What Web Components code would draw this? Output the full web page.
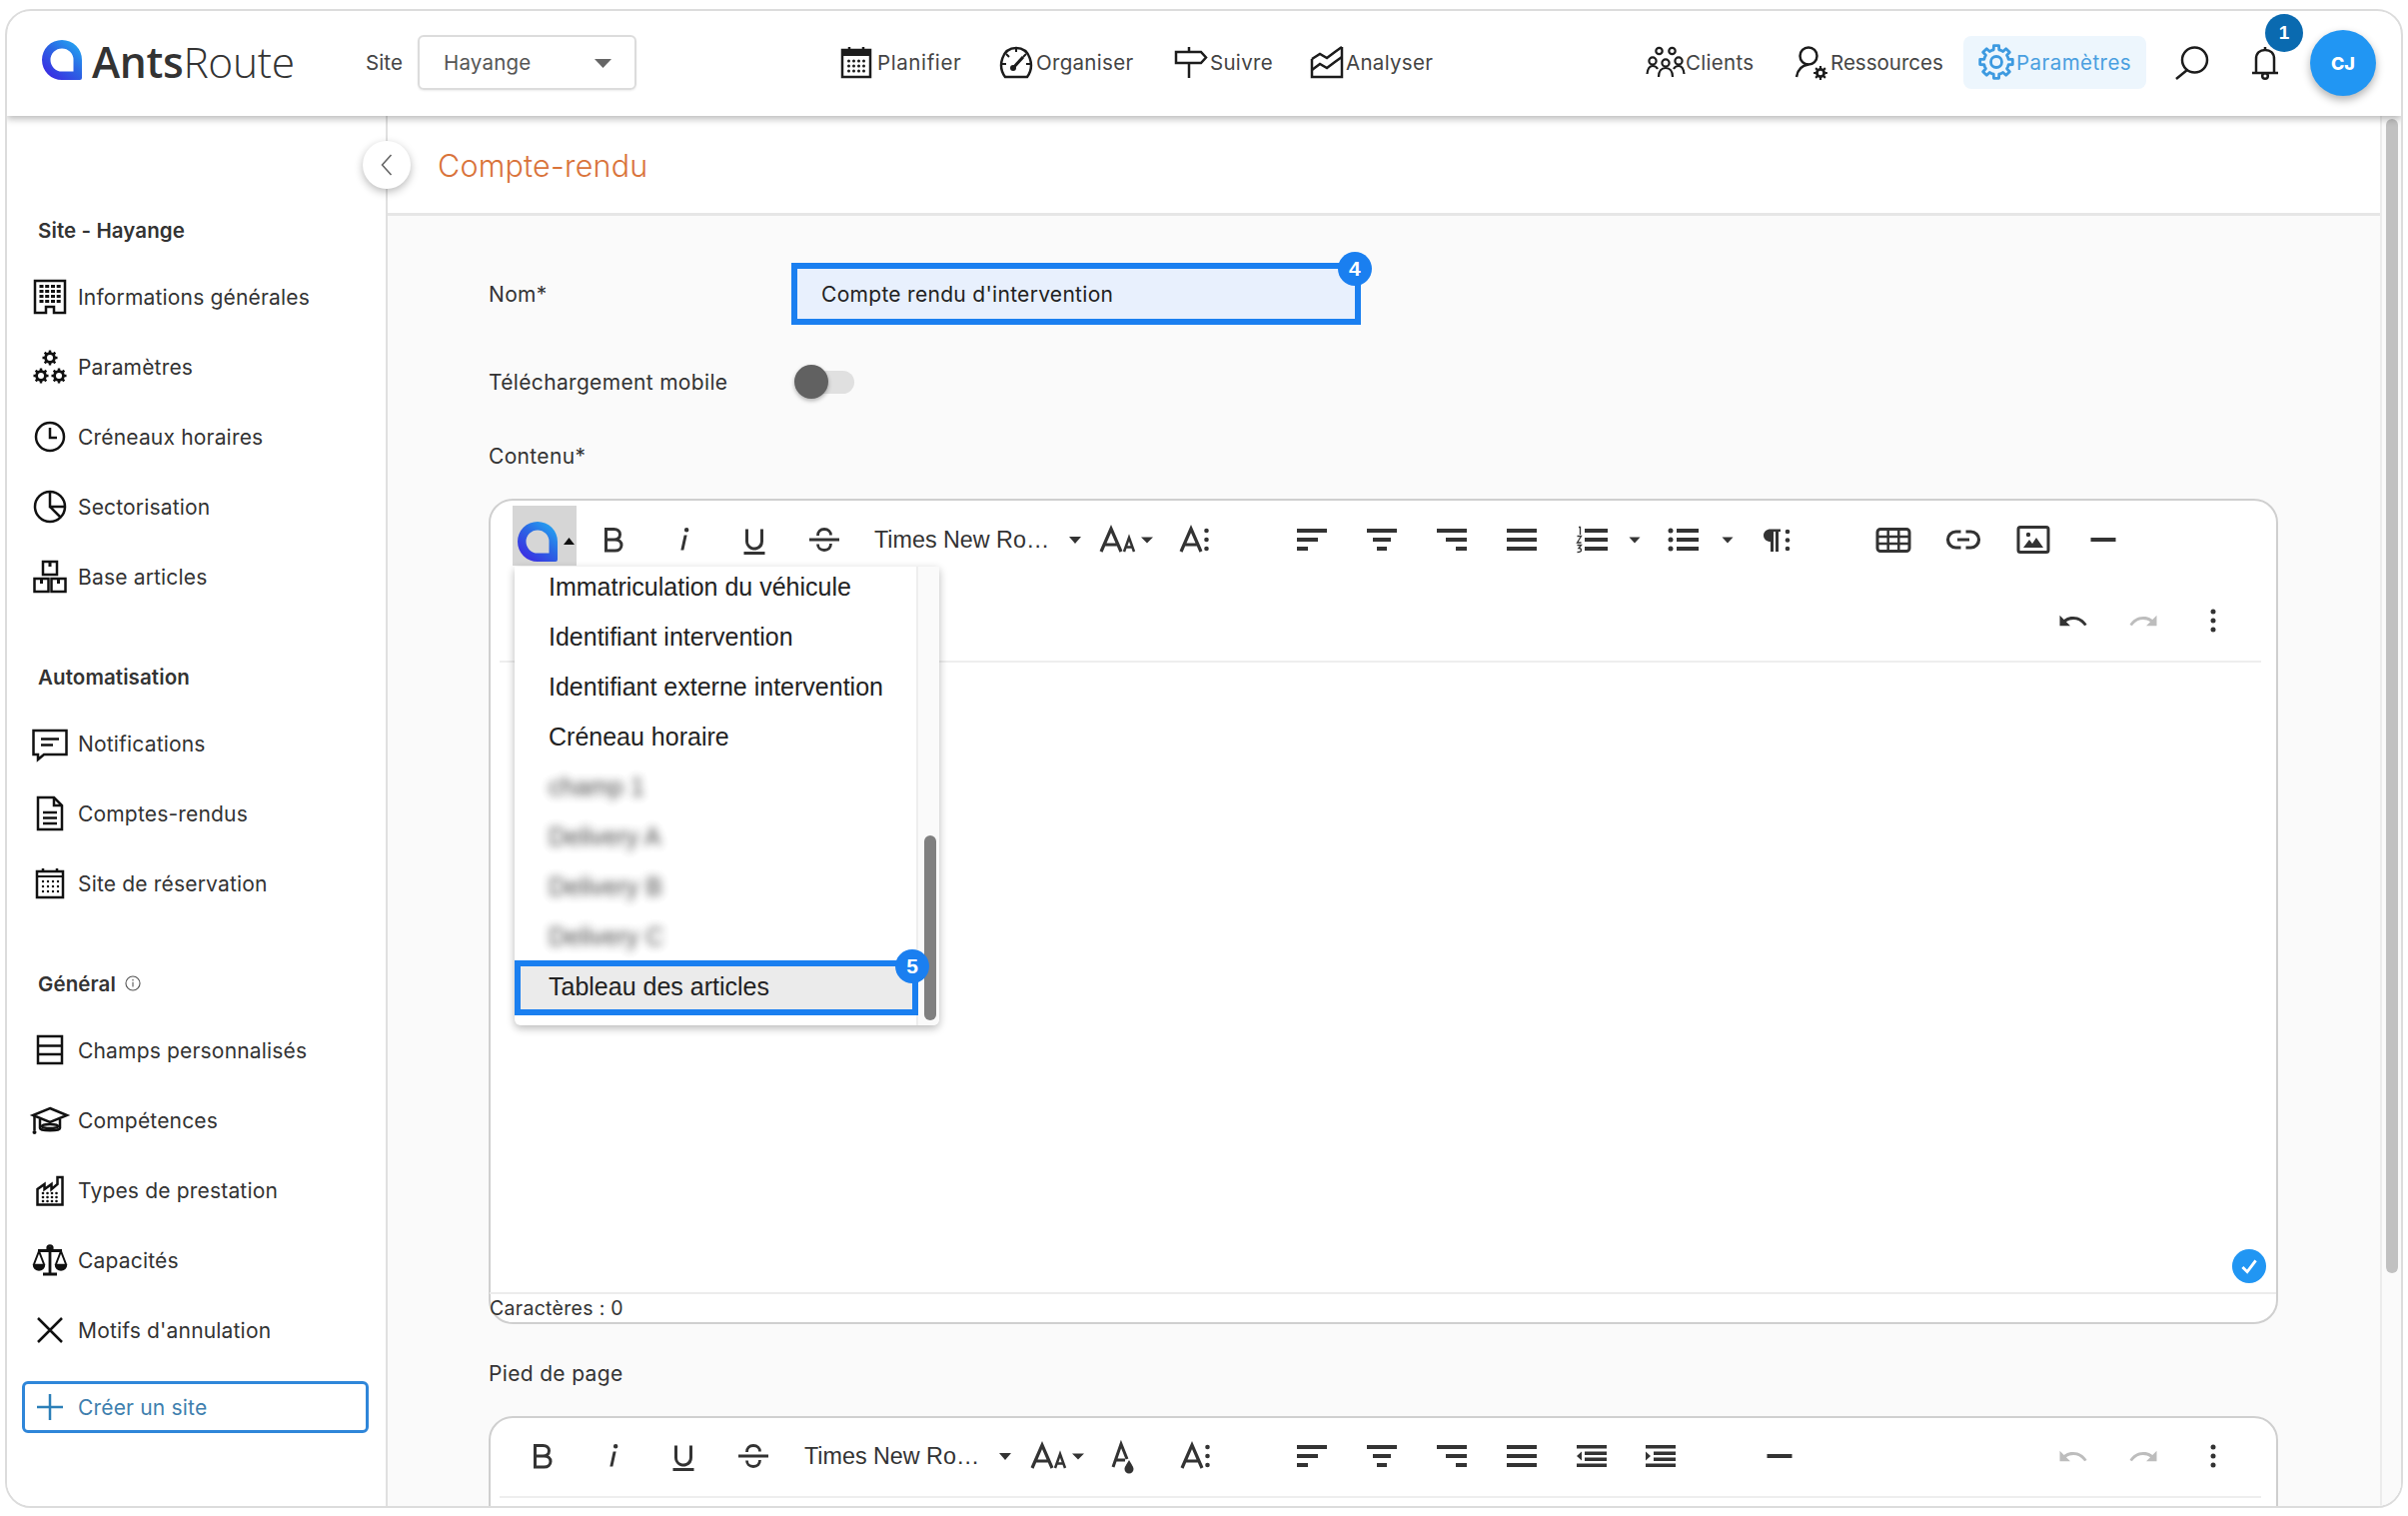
<!DOCTYPE html>
<html lang="fr">
<head>
<meta charset="utf-8">
<title>AntsRoute</title>
<style>
html,body{margin:0;padding:0;background:#fff;}
body{font-family:Inter,"Noto Sans",sans-serif;color:#333;width:2410px;height:1517px;overflow:hidden;}
</style>
</head>
<body>
<ar-app>
  <ar-header slot="header"></ar-header>
  <ar-sidebar slot="side">
    <ar-side-title style="margin-top:94px">Site - Hayange</ar-side-title>
    <ar-side-item icon="building" style="margin-top:12px">Informations générales</ar-side-item>
    <ar-side-item icon="gears">Paramètres</ar-side-item>
    <ar-side-item icon="clock">Créneaux horaires</ar-side-item>
    <ar-side-item icon="pie">Sectorisation</ar-side-item>
    <ar-side-item icon="boxes">Base articles</ar-side-item>
    <ar-side-title style="margin-top:45px">Automatisation</ar-side-title>
    <ar-side-item icon="chat" style="margin-top:12px">Notifications</ar-side-item>
    <ar-side-item icon="doc">Comptes-rendus</ar-side-item>
    <ar-side-item icon="calendar">Site de réservation</ar-side-item>
    <ar-side-title info style="margin-top:45px">Général</ar-side-title>
    <ar-side-item icon="rows" style="margin-top:12px">Champs personnalisés</ar-side-item>
    <ar-side-item icon="cap">Compétences</ar-side-item>
    <ar-side-item icon="factory">Types de prestation</ar-side-item>
    <ar-side-item icon="scales">Capacités</ar-side-item>
    <ar-side-item icon="cross">Motifs d'annulation</ar-side-item>
    <ar-create-button>Créer un site</ar-create-button>
  </ar-sidebar>
  <ar-page slot="main">
    <ar-field-row label="Nom*" style="margin-top:47px;height:62px">
      <ar-text-input>Compte rendu d'intervention<ar-badge slot="badge">4</ar-badge></ar-text-input>
    </ar-field-row>
    <ar-field-row label="Téléchargement mobile" style="margin-top:24px;height:66px">
      <ar-toggle></ar-toggle>
    </ar-field-row>
    <ar-field-label style="margin-top:24px">Contenu*</ar-field-label>
    <ar-editor style="margin-top:26px;height:826px" counter="Caractères : 0" check>
      <ar-toolbar slot="toolbar" style="padding-left:22px">
        <ar-logo-tool></ar-logo-tool>
        <ar-tool icon="bold" style="margin-left:3px"></ar-tool>
        <ar-tool icon="italic"></ar-tool>
        <ar-tool icon="underline"></ar-tool>
        <ar-tool icon="strike"></ar-tool>
        <ar-font-tool style="--w:232px;--pl:15px;--cx:10px">Times New Ro…</ar-font-tool>
        <ar-tool icon="size"></ar-tool>
        <ar-tool icon="adots"></ar-tool>
        <ar-tool icon="aleft" style="margin-left:46px"></ar-tool>
        <ar-tool icon="acenter"></ar-tool>
        <ar-tool icon="aright"></ar-tool>
        <ar-tool icon="ajust"></ar-tool>
        <ar-tool icon="ol" style="--w:69px"></ar-tool>
        <ar-tool icon="caret" style="--w:23px;margin-left:-3px;margin-right:3px"></ar-tool>
        <ar-tool icon="ul"></ar-tool>
        <ar-tool icon="caret" style="--w:23px;margin-left:-3px;margin-right:3px"></ar-tool>
        <ar-tool icon="para" style="--w:69px"></ar-tool>
        <ar-tool icon="table" style="margin-left:48px"></ar-tool>
        <ar-tool icon="link"></ar-tool>
        <ar-tool icon="image"></ar-tool>
        <ar-tool icon="hr"></ar-tool>
      </ar-toolbar>
      <ar-toolbar slot="toolbar" style="margin-top:11px;justify-content:flex-end;padding-right:28px">
        <ar-tool icon="undo"></ar-tool>
        <ar-tool icon="redo" style="color:#bdbdbd"></ar-tool>
        <ar-tool icon="more"></ar-tool>
      </ar-toolbar>
      <ar-dropdown slot="overlay">
        <ar-drop-item>Immatriculation du véhicule</ar-drop-item>
        <ar-drop-item>Identifiant intervention</ar-drop-item>
        <ar-drop-item>Identifiant externe intervention</ar-drop-item>
        <ar-drop-item>Créneau horaire</ar-drop-item>
        <ar-drop-item blurred>champ 1</ar-drop-item>
        <ar-drop-item blurred>Delivery A</ar-drop-item>
        <ar-drop-item blurred>Delivery B</ar-drop-item>
        <ar-drop-item blurred>Delivery C</ar-drop-item>
        <ar-drop-item selected>Tableau des articles<ar-badge slot="badge">5</ar-badge></ar-drop-item>
      </ar-dropdown>
    </ar-editor>
    <ar-field-label style="margin-top:32px">Pied de page</ar-field-label>
    <ar-editor style="margin-top:26px;height:400px;flex:none" compact>
      <ar-toolbar slot="toolbar" style="padding-left:18px;padding-right:28px">
        <ar-tool icon="bold"></ar-tool>
        <ar-tool icon="italic"></ar-tool>
        <ar-tool icon="underline"></ar-tool>
        <ar-tool icon="strike"></ar-tool>
        <ar-font-tool style="--w:234px;--pl:16px;--cx:11px">Times New Ro…</ar-font-tool>
        <ar-tool icon="size"></ar-tool>
        <ar-tool icon="adrop"></ar-tool>
        <ar-tool icon="adots"></ar-tool>
        <ar-tool icon="aleft" style="margin-left:45px"></ar-tool>
        <ar-tool icon="acenter"></ar-tool>
        <ar-tool icon="aright"></ar-tool>
        <ar-tool icon="ajust"></ar-tool>
        <ar-tool icon="outdent" style="--w:69px"></ar-tool>
        <ar-tool icon="indent"></ar-tool>
        <ar-tool icon="hr" style="margin-left:49px"></ar-tool>
        <ar-tool icon="undo" style="margin-left:auto;color:#bdbdbd"></ar-tool>
        <ar-tool icon="redo" style="color:#bdbdbd"></ar-tool>
        <ar-tool icon="more"></ar-tool>
      </ar-toolbar>
    </ar-editor>
  </ar-page>
</ar-app>

<script>
const L='fill="none" stroke="currentColor" stroke-width="2.5"';
const F='fill="currentColor"';
const rects=(a)=>a.map(r=>`<rect x="${r[0]}" y="${r[1]}" width="${r[2]}" height="${r[3]}" ${F}/>`).join('');
const dots=(xs,ys,r)=>ys.map(y=>xs.map(x=>`<circle cx="${x}" cy="${y}" r="${r}" ${F}/>`).join('')).join('');
const blocks=(xs,ys,w,h)=>ys.map(y=>xs.map(x=>`<rect x="${x}" y="${y}" width="${w}" height="${h}" ${F}/>`).join('')).join('');
const v24=(s)=>`<g transform="scale(1.5)">${s}</g>`;
const cog=(cx,cy,R,r,n)=>{let d='';const s=Math.PI*2/n;for(let i=0;i<n;i++){const a=i*s-Math.PI/2;
  const p=[[r,a-s*.5],[r,a-s*.28],[R,a-s*.2],[R,a+s*.2],[r,a+s*.28]];
  p.forEach((q,j)=>{d+=(i==0&&j==0?'M':'L')+(cx+q[0]*Math.cos(q[1])).toFixed(2)+' '+(cy+q[0]*Math.sin(q[1])).toFixed(2)});}
  return d+'Z'};
const gear=(x,y)=>`<path d="${cog(x,y,7.6,5.8,8)}" ${F}/><circle cx="${x}" cy="${y}" r="3" fill="#fff"/>`;
const LOGO=`<defs><linearGradient id="g" x1="1" y1="0" x2="0.15" y2="1"><stop offset="0" stop-color="#22b4f4"/><stop offset=".5" stop-color="#2b66e4"/><stop offset="1" stop-color="#3d25e2"/></linearGradient></defs>
<path fill="url(#g)" fill-rule="evenodd" d="M18 -2A20 20 0 0 1 38 18V36a2 2 0 0 1-2 2H18A20 20 0 0 1 18 -2zM18 6.500a11.500 11.500 0 1 0 0 23h11.500V18A11.500 11.500 0 0 0 18 6.500z"/>`;

const ICONS={
logo:LOGO,
building:`<path d="M3 2h30v32H22v-6h-8v6H3z" ${L}/>`+blocks([7.5,13.2,19,24.7],[6,11,16,21],4,3),
gears:gear(18,9)+gear(9,27)+gear(27,27),
clock:`<circle cx="18" cy="18" r="14" ${L}/><path d="M18 9V19H25" ${L}/>`,
pie:`<circle cx="18" cy="18" r="15" ${L}/><path d="M18 3V18H33M18 18L29 29" ${L}/>`,
boxes:`<rect x="11" y="3" width="14" height="13" ${L}/><rect x="2.5" y="20" width="14" height="13" ${L}/><rect x="19.5" y="20" width="14" height="13" ${L}/>`+rects([[16.5,3,3,5],[8,20,3,5],[25,20,3,5]]),
chat:`<path d="M1.5 5h33v24H12l-6 5v-5H1.5z" ${L}/><path d="M9 13.5h18M9 19.5h12" ${L}/>`,
doc:`<path d="M6 2h16l8 8v24H6z" ${L}/><path d="M22 2v8h8" ${L}/><path d="M11 17h14M11 22.5h14M11 28h14" ${L}/>`,
calendar:`<rect x="5" y="6" width="26" height="26" ${L}/><path d="M5 11H31" fill="none" stroke="currentColor" stroke-width="2"/><path d="M11 3v4M25 3v4" ${L}/>`+dots([11,16,21,26],[16,21,26],1.2),
rows:`<rect x="6" y="4" width="24" height="27" ${L}/><path d="M6 13.5H30M6 22H30" ${L}/>`,
cap:`<path d="M18 6L35 13L18 20L1 13z" ${L}/><path d="M8 17v9c0 3 20 3 20 0V17" ${L}/><ellipse cx="18" cy="24" rx="8" ry="2" ${L}/><path d="M2.5 14V28" ${L}/><circle cx="2.5" cy="30" r="2" ${F}/>`,
factory:`<path d="M5.5 32.5V17l7-5v5l7-5v5l6-5V5h5v27.5z" ${L}/>`+dots([11,15.5,20,24.5],[21,25,29],1.3),
scales:`<path d="M18 5V31M11 32h14M6 8.5H30" fill="none" stroke="currentColor" stroke-width="2.8"/><circle cx="18" cy="6" r="2.4" ${L}/><path d="M7 9L2 22M7 9L12 22M29 9L24 22M29 9L34 22" fill="none" stroke="currentColor" stroke-width="2"/><path d="M1.5 22.5a5.5 5.5 0 0 0 11 0zM23.5 22.5a5.5 5.5 0 0 0 11 0z" ${F} stroke="currentColor" stroke-width="1.5"/>`,
cross:`<path d="M6 6L30 30M30 6L6 30" ${L}/>`,
plus:`<path d="M18 5V31M5 18H31" ${L}/>`,
info:`<circle cx="18" cy="18" r="16" fill="none" stroke="currentColor" stroke-width="2.5"/><path d="M18 15v11" ${L}/><circle cx="18" cy="10.5" r="1.8" ${F}/>`,
nplan:`<rect x="4" y="6" width="28" height="27" ${L}/><rect x="4" y="6" width="28" height="6" ${F}/><path d="M11 3v5M25 3v5" ${L}/>`+dots([10.5,15.5,20.5,25.5],[17,22,27],1.5),
ngauge:`<path d="M7 33C-1 22 4 4 18 4C32 4 37 22 29 33z" ${L}/><path d="M18 4v4M8 10l3 3M28 10l-3 3M4 20h4M32 20h-4" fill="none" stroke="currentColor" stroke-width="2"/><path d="M15 24L25 13" fill="none" stroke="currentColor" stroke-width="3"/><circle cx="15" cy="24" r="3" ${F}/>`,
nsign:`<path d="M16 3V8M16 19V34" ${L}/><path d="M3 8h25l5 5.5-5 5.5H3z" ${L}/>`,
nchart:`<path d="M3 15V33H33V3" ${L}/><path d="M3 15L11 10L18 14L26 8L33 3M3 26L11 20L18 24L26 18L33 13" ${L}/>`,
npeople:`<g fill="none" stroke="currentColor" stroke-width="2.2"><circle cx="11.5" cy="7" r="3.2"/><circle cx="24.5" cy="7" r="3.2"/><circle cx="5" cy="17" r="3.6"/><circle cx="18" cy="19" r="3.6"/><circle cx="31" cy="17" r="3.6"/><path d="M-.5 30C0 25 1.500 22 5 22C7 22 9 23 10 25M36.500 30C36 25 34.500 22 31 22C29 22 27 23 26 25M11 33C11 27 14 24 18 24C22 24 25 27 25 33"/></g>`,
nres:`<circle cx="13" cy="12" r="8.5" ${L}/><path d="M1 33C2 26 6 21.500 13 20.500" ${L}/><path d="${cog(25,29,7,5,8)}" ${F}/><circle cx="25" cy="29" r="2.2" fill="#fff"/>`,
ngear:`<path d="${cog(18,18,16.5,12.5,8)}" fill="none" stroke="currentColor" stroke-width="2.8" stroke-linejoin="round"/><circle cx="18" cy="18" r="5.5" fill="none" stroke="currentColor" stroke-width="2.8"/>`,
search:`<circle cx="20.500" cy="16" r="12.500" ${L}/><path d="M13 26L2 35" ${L}/>`,
bell:`<path d="M18 3v3M9 28V15C9 9 13 6 18 6C23 6 27 9 27 15V28M5 29H31" ${L}/><circle cx="18" cy="32" r="2.800" ${L}/>`,
bold:`<path d="M9.500 7.500h8c3.500 0 6 2 6 5.200s-2.500 5.300-6 5.300h-8zM9.500 18h9c3.800 0 6.500 2.200 6.500 5.500S22.300 29 18.500 29h-9z" fill="none" stroke="currentColor" stroke-width="3"/>`,
italic:v24(`<path ${F} d="M11.760 9h2l-2.200 10h-2Zm1.680-5a1.500 1.500 0 1 0 1.500 1.500 1.500 1.500 0 0 0-1.500-1.500Z"/>`),
underline:v24(`<path ${F} d="M19 20v2H5V20Zm-3-6.785a4 4 0 0 1-5.740 3.400A3.750 3.750 0 0 1 8 13.085V5.005H6v8.210a6 6 0 0 0 8 5.440 5.851 5.851 0 0 0 4-5.650v-8H16Z"/>`),
strike:`<rect x="3" y="16.500" width="30" height="3" ${F}/><path d="M11.500 14C11.500 10 14 7.500 18 7.500C22 7.500 24.500 10 24.500 13.500M24.500 22C24.500 26 22 28.500 18 28.500C14 28.500 11.500 26 11.500 22.500" fill="none" stroke="currentColor" stroke-width="2.8"/>`,
size:`<path d="M-7 30L3 7L13 30M-3.500 23H9.500" fill="none" stroke="currentColor" stroke-width="3.200"/><path d="M16 30L21 16L26 30M18 25.500H24" fill="none" stroke="currentColor" stroke-width="2.500"/><path d="M33 15.500h12l-6 6z" ${F}/>`,
adots:`<path d="M3 30L13 7L23 30M7 23H19" fill="none" stroke="currentColor" stroke-width="3.200"/>`+dots([28.500],[9,18,27],2.300),
adrop:`<path d="M4 29L12 6L18 21M6.500 22H16" fill="none" stroke="currentColor" stroke-width="3"/><path ${F} d="M20 22C17 27 15.500 29 15.500 31a4.500 4.500 0 0 0 9 0C24.500 29 23 27 20 22z"/>`,
caret:`<path d="M12.500 15.500h11l-5.500 6z" ${F}/>`,
aleft:rects([[3,7,30,4],[3,16,21,4],[3,25,11,4]]),
acenter:rects([[3,7,30,4],[9,16,18,4],[13,25,10,4]]),
aright:rects([[3,7,30,4],[12,16,21,4],[22,25,11,4]]),
ajust:rects([[3,7,30,4],[3,16,30,4],[3,25,30,4]]),
ol:rects([[11,7,23,4],[11,16,23,4],[11,25,23,4]])+`<path d="M5 5.500h1.500V13M3.500 14.500h4L3.500 21h4M3.500 23.500h4L5 26.500c2 0 2.500 1 2.500 2s-1 2-4 2" fill="none" stroke="currentColor" stroke-width="1.300"/>`,
ul:rects([[11,7,22,4],[11,16,22,4],[11,25,22,4]])+dots([5],[9,18,27],2.500),
para:`<path ${F} d="M12 7.500h10v2.500h-2v20h-3V10h-2v20h-3V20c-4 0-7-3-7-6.300 0-3.500 3-6.200 7-6.200z"/>`+dots([29],[10,18.500,27],2.300),
table:`<rect x="2" y="7.500" width="32" height="22" rx="3" fill="none" stroke="currentColor" stroke-width="3"/><path d="M12.700 7.500v22M23.300 7.500v22M2 15h32M2 22h32" fill="none" stroke="currentColor" stroke-width="2.500"/>`,
link:`<path d="M15.500 10h-5a8 8 0 0 0 0 16h5M20.500 10h5a8 8 0 0 1 0 16h-5M12 18H24" fill="none" stroke="currentColor" stroke-width="3.200"/>`,
image:`<rect x="3" y="5.500" width="30" height="25" rx="2" fill="none" stroke="currentColor" stroke-width="3"/><circle cx="13" cy="13" r="2.200" ${F}/><path ${F} d="M8 26l6-8 3 4 4-6 7 10z"/>`,
hr:rects([[5.500,16,25,4]]),
undo:v24(`<path ${F} d="M10.400 9.400c-1.700.3-3.200.9-4.600 2L3 8.500v7h7l-2.700-2.700c3.700-2.600 8.800-1.800 11.500 1.900.2.3.4.5.5.8l1.800-.9C18.900 10.800 14.700 8.700 10.400 9.400z"/>`),
redo:v24(`<path ${F} d="M13.600 9.400c1.700.3 3.200.9 4.600 2L21 8.500v7h-7l2.700-2.700C13 10.200 7.900 11 5.200 14.700c-.2.3-.4.5-.5.8L3 14.600C5.100 10.800 9.300 8.700 13.600 9.400z"/>`),
more:dots([18],[9,18,27],2.500),
outdent:rects([[3,7,30,3.500],[11,13.500,22,3.500],[11,19.500,22,3.500],[3,25.500,30,3.500]])+`<path d="M8 13.500v9L3 18z" ${F}/>`,
indent:rects([[3,7,30,3.500],[11,13.500,22,3.500],[11,19.500,22,3.500],[3,25.500,30,3.500]])+`<path d="M3 13.500v9L8 18z" ${F}/>`,
check:`<path d="M11 19l5 5 9-12" fill="none" stroke="#fff" stroke-width="3"/>`
};

function def(name,css,html,extra){
  const T=document.createElement('template');
  T.innerHTML=`<style>${css}</style>${html}`;
  customElements.define(name,class extends HTMLElement{
    constructor(){super();this.attachShadow({mode:'open'}).appendChild(T.content.cloneNode(true));}
    connectedCallback(){if(extra)extra.call(this,this.shadowRoot);}
  });
}

const ICON_T=document.createElement('template');
ICON_T.innerHTML=`<style>:host{display:inline-flex;width:var(--iw,36px);height:36px;justify-content:center;align-items:center;flex:none;color:inherit}
svg{width:36px;height:36px;flex:none;overflow:visible;display:block}</style><svg viewBox="0 0 36 36"></svg>`;
customElements.define('ar-icon',class extends HTMLElement{
  static get observedAttributes(){return ['name'];}
  constructor(){super();this.attachShadow({mode:'open'}).appendChild(ICON_T.content.cloneNode(true));}
  attributeChangedCallback(){this.render();}
  connectedCallback(){this.render();}
  render(){this.shadowRoot.querySelector('svg').innerHTML=ICONS[this.getAttribute('name')]||'';}
});

def('ar-app',`:host{display:flex;flex-direction:column;box-sizing:border-box;width:2400px;height:1500px;margin:9px 5px 8px;border:2px solid #dcdcdc;border-radius:26px;overflow:hidden;background:#fff}
.b{display:flex;flex:1;min-height:0}`,`<slot name="header"></slot><div class="b"><slot name="side"></slot><slot name="main"></slot></div>`);

def('ar-badge',`:host{position:absolute;top:-17px;right:-17px;width:34px;height:34px;border-radius:50%;background:#1a7ff0;color:#fff;display:flex;align-items:center;justify-content:center;font:700 21px "Liberation Sans",sans-serif;z-index:5}`,`<slot></slot>`);

def('ar-nav',`:host{display:flex;align-items:center;flex:none;width:var(--w);box-sizing:border-box;height:53px;font-size:20.5px;letter-spacing:var(--ls,.3px);color:#444;font-weight:400}
ar-icon{margin-right:var(--g,5px);color:#1c1c1c}
:host([active]){color:#4a9fe0;background:#edf6fd;border-radius:8px;padding-left:17px}
:host([active]) ar-icon{color:#3d9ae0}`,`<ar-icon></ar-icon><slot></slot>`,function(s){s.querySelector('ar-icon').setAttribute('name',this.getAttribute('icon'));});

def('ar-header',`:host{display:flex;align-items:center;box-sizing:border-box;height:105px;padding:0 0 3px 35px;flex:none;position:relative;z-index:3;background:#fff;box-shadow:0 3px 7px rgba(0,0,0,.28)}
.logo{display:flex;align-items:center;width:324px;flex:none}
.logo ar-icon{margin-top:-4px}
.lt{margin-left:10px;font:600 42.5px/1 "Open Sans",sans-serif;color:#333;letter-spacing:-.3px}
.lt span{font-weight:300}
.site{font-size:20.5px;width:52px;flex:none;color:#444;letter-spacing:.1px}
.sel{box-sizing:border-box;width:219px;height:55px;flex:none;border:2px solid #dcdcdc;border-radius:6px;display:flex;align-items:center;padding-left:24px;font-size:20.5px;letter-spacing:.2px;color:#555;position:relative;box-shadow:0 1px 2px rgba(0,0,0,.08)}
.sel svg{position:absolute;left:175px;top:22px}
.avatar{width:66px;height:66px;border-radius:50%;background:#2196f3;color:#fff;font:800 18px Inter,sans-serif;display:flex;align-items:center;justify-content:center;flex:none;margin:2px 0 0 32px;box-shadow:0 4px 8px rgba(0,0,0,.3)}
.ic{color:#1c1c1c;flex:none}
.bell{position:relative;flex:none;color:#1c1c1c;--iw:26px;width:26px;height:36px;margin-left:44px}
.bdg{position:absolute;left:13px;top:-30px;width:38px;height:38px;border-radius:50%;background:#0a6ab0;color:#fff;font:700 19px "Liberation Sans",sans-serif;display:flex;align-items:center;justify-content:center}`,
`<div class="logo"><ar-icon name="logo" style="--iw:40px"></ar-icon><div class="lt">Ants<span>Route</span></div></div>
<div class="site">Site</div>
<div class="sel">Hayange<svg width="17" height="9" viewBox="0 0 17 9"><path d="M0 0h17l-8.500 9z" fill="#666"/></svg></div>
<ar-nav icon="nplan" style="--w:159px;--iw:28px;--g:7px;--ls:.6px;margin-left:206px">Planifier</ar-nav>
<ar-nav icon="ngauge" style="--w:175px;--iw:30px;--g:5px">Organiser</ar-nav>
<ar-nav icon="nsign" style="--w:135px;--iw:30px;--g:4px">Suivre</ar-nav>
<ar-nav icon="nchart" style="--w:338px;--iw:31px;--g:4px">Analyser</ar-nav>
<ar-nav icon="npeople" style="--w:147px;--iw:34px;--g:3px">Clients</ar-nav>
<ar-nav icon="nres" style="--w:168px;--iw:35px;--g:0px;--ls:0px">Ressources</ar-nav>
<ar-nav icon="ngear" active style="--w:183px;--iw:31px;--g:5px;--ls:.45px">Paramètres</ar-nav>
<ar-icon class="ic" name="search" style="--iw:32px;margin-left:30px"></ar-icon>
<div class="bell"><ar-icon name="bell"></ar-icon><div class="bdg">1</div></div>
<div class="avatar">CJ</div>`);

def('ar-sidebar',`:host{display:flex;flex-direction:column;box-sizing:border-box;width:381px;flex:none;border-right:2px solid #e0e0e0;background:#fff;overflow:hidden}`,`<slot></slot>`);

def('ar-side-title',`:host{display:flex;align-items:center;height:40px;flex:none;padding-left:31px;font-size:20.5px;font-weight:600;color:#333;letter-spacing:.1px}
ar-icon{display:none;--iw:16px;margin-left:9px;color:#555;transform:scale(.44)}
:host([info]) ar-icon{display:inline-flex}`,`<slot></slot><ar-icon name="info"></ar-icon>`);

def('ar-side-item',`:host{display:flex;align-items:center;height:70px;flex:none;padding-left:25px;font-size:21px;letter-spacing:.18px;color:#333}
ar-icon{margin-right:10px;color:#111}`,`<ar-icon></ar-icon><slot></slot>`,function(s){s.querySelector('ar-icon').setAttribute('name',this.getAttribute('icon'));});

def('ar-create-button',`:host{display:flex;align-items:center;box-sizing:border-box;width:347px;height:52px;margin:16px 0 0 15px;padding-left:7px;border:3px solid #2f86d9;border-radius:6px;color:#3f7fae;font-size:21px;letter-spacing:.18px;flex:none}
ar-icon{margin-right:10px;color:#2b7fb8}`,`<ar-icon name="plus"></ar-icon><slot></slot>`);

def('ar-page',`:host{display:flex;flex:1;min-width:0;background:#fafafa;position:relative}
.col{flex:1;min-width:0;display:flex;flex-direction:column;overflow:hidden}
.head{height:100px;box-sizing:border-box;flex:none;background:#fff;border-bottom:3px solid #e6e6e6;display:flex;align-items:center;padding:1px 0 0 50px;color:#d9733a;font-size:30.5px;letter-spacing:.2px;font-weight:300}
.body{flex:1;min-height:0;display:flex;flex-direction:column;padding:0 99px 0 101px;overflow:hidden}
.bar{width:21px;flex:none;border-left:2px solid #ececec;background:#fafafa;box-sizing:border-box;padding:3px 3px 0 4px}
.thumb{height:1155px;background:#c1c1c1;border-radius:7px}
.toggle{position:absolute;left:-25px;top:25px;width:48px;height:48px;border-radius:50%;background:#fff;box-shadow:0 3px 9px rgba(0,0,0,.28);display:flex;align-items:center;justify-content:center;z-index:4}`,
`<div class="toggle"><svg width="12" height="22" viewBox="0 0 12 22"><path d="M10.500 1L1.500 11L10.500 21" fill="none" stroke="#666" stroke-width="1.600"/></svg></div>
<div class="col"><div class="head">Compte-rendu</div><div class="body"><slot></slot></div></div><div class="bar"><div class="thumb"></div></div>`);

def('ar-field-row',`:host{display:flex;align-items:center;flex:none;font-size:21px;letter-spacing:.33px;color:#333}
.l{width:303px;flex:none}`,`<div class="l"></div><slot></slot>`,function(s){s.querySelector('.l').textContent=this.getAttribute('label');});

def('ar-field-label',`:host{display:flex;align-items:center;height:34px;flex:none;font-size:21px;letter-spacing:.33px;color:#333}`,`<slot></slot>`);

def('ar-text-input',`:host{display:flex;align-items:center;position:relative;box-sizing:border-box;width:570px;height:62px;border:6px solid #1a7ff0;background:#e8f0fd;padding-left:24px;font-size:21px;letter-spacing:.3px;color:#222}`,`<slot></slot><slot name="badge"></slot>`);

def('ar-toggle',`:host{display:block;position:relative;width:63px;height:34px}
.t{position:absolute;left:20px;top:6px;width:43px;height:23px;border-radius:12px;background:#e0e0e0}
.k{position:absolute;left:3px;top:0;width:34px;height:34px;border-radius:50%;background:#616161;box-shadow:0 2px 4px rgba(0,0,0,.3)}`,`<div class="t"></div><div class="k"></div>`);

def('ar-editor',`:host{display:flex;flex-direction:column;position:relative;box-sizing:border-box;border:2px solid #cfcfcf;border-radius:24px;background:#fff;flex:none;width:1791px}
.tb{padding-top:4px;flex:none}
.bar{height:0;margin:5px 15px 0 9px;border-top:2px solid #eee;flex:none}
.area{flex:1;min-height:0}
.cnt{flex:none;height:30px;box-sizing:border-box;border-top:2px solid #ececec;font-size:19.5px;letter-spacing:.3px;display:flex;align-items:center;color:#333;margin-left:-1px}
.chk{position:absolute;right:10px;bottom:39px;width:34px;height:34px;border-radius:50%;background:#2196f3;display:none;align-items:center;justify-content:center}
.chk svg{width:34px;height:34px}
:host([check]) .chk{display:flex}
:host([compact]) .cnt{display:none}
:host([compact]) .tb{padding-top:3px}`,
`<div class="tb"><slot name="toolbar"></slot></div><div class="bar"></div><div class="area"></div><div class="cnt"></div><div class="chk"><svg viewBox="0 0 36 36">${ICONS.check}</svg></div><slot name="overlay"></slot>`,
function(s){s.querySelector('.cnt').textContent=this.getAttribute('counter')||'';});

def('ar-toolbar',`:host{display:flex;align-items:center;height:70px;color:#333}`,`<slot></slot>`);
def('ar-tool',`:host{display:flex;align-items:center;justify-content:center;width:var(--w,70px);height:70px;flex:none}
ar-icon{--iw:36px}`,`<ar-icon></ar-icon>`,function(s){s.querySelector('ar-icon').setAttribute('name',this.getAttribute('icon'));});
def('ar-font-tool',`:host{display:flex;align-items:center;position:relative;width:var(--w);height:70px;flex:none;box-sizing:border-box;padding-left:var(--pl);font:23.300px "Liberation Sans",sans-serif;color:#333}
svg{position:absolute;right:var(--cx);top:32px}`,`<slot></slot><svg width="12" height="7" viewBox="0 0 12 7"><path d="M0 0h12l-6 7z" fill="#333"/></svg>`);
def('ar-logo-tool',`:host{display:flex;align-items:center;position:relative;width:64px;height:60px;flex:none;background:#d6d6d6;margin-top:-8px;padding-left:5px;box-sizing:border-box}
ar-icon{--iw:40px;margin-top:11px}
svg{position:absolute;left:51px;top:32px}`,`<ar-icon name="logo"></ar-icon><svg width="11" height="7" viewBox="0 0 11 7"><path d="M5.500 0L11 7H0z" fill="#111"/></svg>`);

def('ar-dropdown',`:host{position:absolute;left:24px;top:66px;width:425px;height:459px;background:#fff;border-radius:0 0 6px 6px;box-shadow:0 3px 8px rgba(0,0,0,.28);display:flex;overflow:hidden;z-index:4;font:25px "Liberation Sans",sans-serif;color:#222}
.list{width:402px;flex:none;margin-top:-5px;position:relative;z-index:2}
.sb{flex:1;background:#fafafa;border-left:2px solid #eee;box-sizing:border-box;padding:269px 3px 0 6px}
.th{height:185px;background:#808080;border-radius:7px}`,`<div class="list"><slot></slot></div><div class="sb"><div class="th"></div></div>`);

def('ar-drop-item',`:host{display:flex;align-items:center;box-sizing:border-box;height:50px;padding-left:34px;position:relative;white-space:nowrap}
.t{display:block}
:host([blurred]) .t{filter:blur(4.5px);color:#333;opacity:.9}
:host([selected]){height:55px;width:404px;margin-top:-1px;border:6px solid #1a7ff0;background:#ebebeb;padding-left:28px;padding-bottom:3px}`,`<span class="t"><slot></slot></span><slot name="badge"></slot>`);

</script>
</body>
</html>
